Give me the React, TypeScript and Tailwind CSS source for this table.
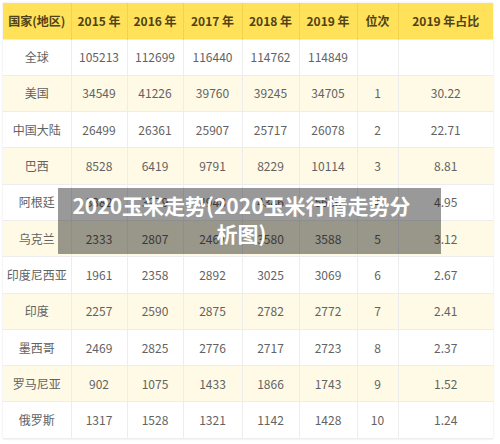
import React from 'react';

const headers = ['国家(地区)', '2015 年', '2016 年', '2017 年', '2018 年', '2019 年', '位次', '2019 年占比'];

const widths = ['w-[68px]', 'w-[56px]', 'w-[56px]', 'w-[59px]', 'w-[57px]', 'w-[58px]', 'w-[41px]', 'w-[95px]'];

const rows: string[][] = [
    ['全球', '105213', '112699', '116440', '114762', '114849', '', ''],
    ['美国', '34549', '41226', '39760', '39245', '34705', '1', '30.22'],
    ['中国大陆', '26499', '26361', '25907', '25717', '26078', '2', '22.71'],
    ['巴西', '8528', '6419', '9791', '8229', '10114', '3', '8.81'],
    ['阿根廷', '3382', '3979', '4948', '4346', '5686', '4', '4.95'],
    ['乌克兰', '2333', '2807', '2467', '3580', '3588', '5', '3.12'],
    ['印度尼西亚', '1961', '2358', '2892', '3025', '3069', '6', '2.67'],
    ['印度', '2257', '2590', '2875', '2782', '2772', '7', '2.41'],
    ['墨西哥', '2469', '2825', '2776', '2717', '2723', '8', '2.37'],
    ['罗马尼亚', '902', '1075', '1433', '1866', '1743', '9', '1.52'],
    ['俄罗斯', '1317', '1528', '1321', '1142', '1428', '10', '1.24'],
];

export default function App() {
    return (
        <div className="w-[500px] h-[444px] bg-white overflow-hidden pt-[3px] pl-[3px] font-['Noto_Sans_CJK_SC','Noto_Sans',sans-serif]">
            <div className="relative w-[490px] shadow-[0_0_2px_rgba(0,0,0,0.12)]">
                <table className="w-[490px] table-fixed border-collapse text-[12px]">
                    <thead>
                        <tr className="h-[36px] bg-[#ffe259]">
                            {headers.map((h, i) => (
                                <th
                                    key={h}
                                    className={`${widths[i]} border-l border-[#f3d34e] first:border-l-0 font-bold text-[#4f4218] text-center`}
                                >
                                    {h}
                                </th>
                            ))}
                        </tr>
                    </thead>
                    <tbody>
                        {rows.map((row, r) => (
                            <tr
                                key={row[0]}
                                className={r % 2 === 1 ? 'h-[36.3px] bg-[#fffae6]' : 'h-[36.3px] bg-white'}
                            >
                                {row.map((cell, i) => (
                                    <td
                                        key={i}
                                        className="border border-[#ededed] first:border-l-0 last:border-r-0 text-center text-[#626262]"
                                    >
                                        {cell}
                                    </td>
                                ))}
                            </tr>
                        ))}
                    </tbody>
                </table>

                {/* caption overlay */}
                <div className="absolute left-[55px] top-[185px] w-[383px] h-[66px] bg-black/40 flex items-center justify-center pl-[8px] pr-[24px] pb-[5px]">
                    <p className="text-white font-bold text-[21px] leading-[28px] text-center">
                        2020玉米走势(2020玉米行情走势分析图)
                    </p>
                </div>
            </div>
        </div>
    );
}
